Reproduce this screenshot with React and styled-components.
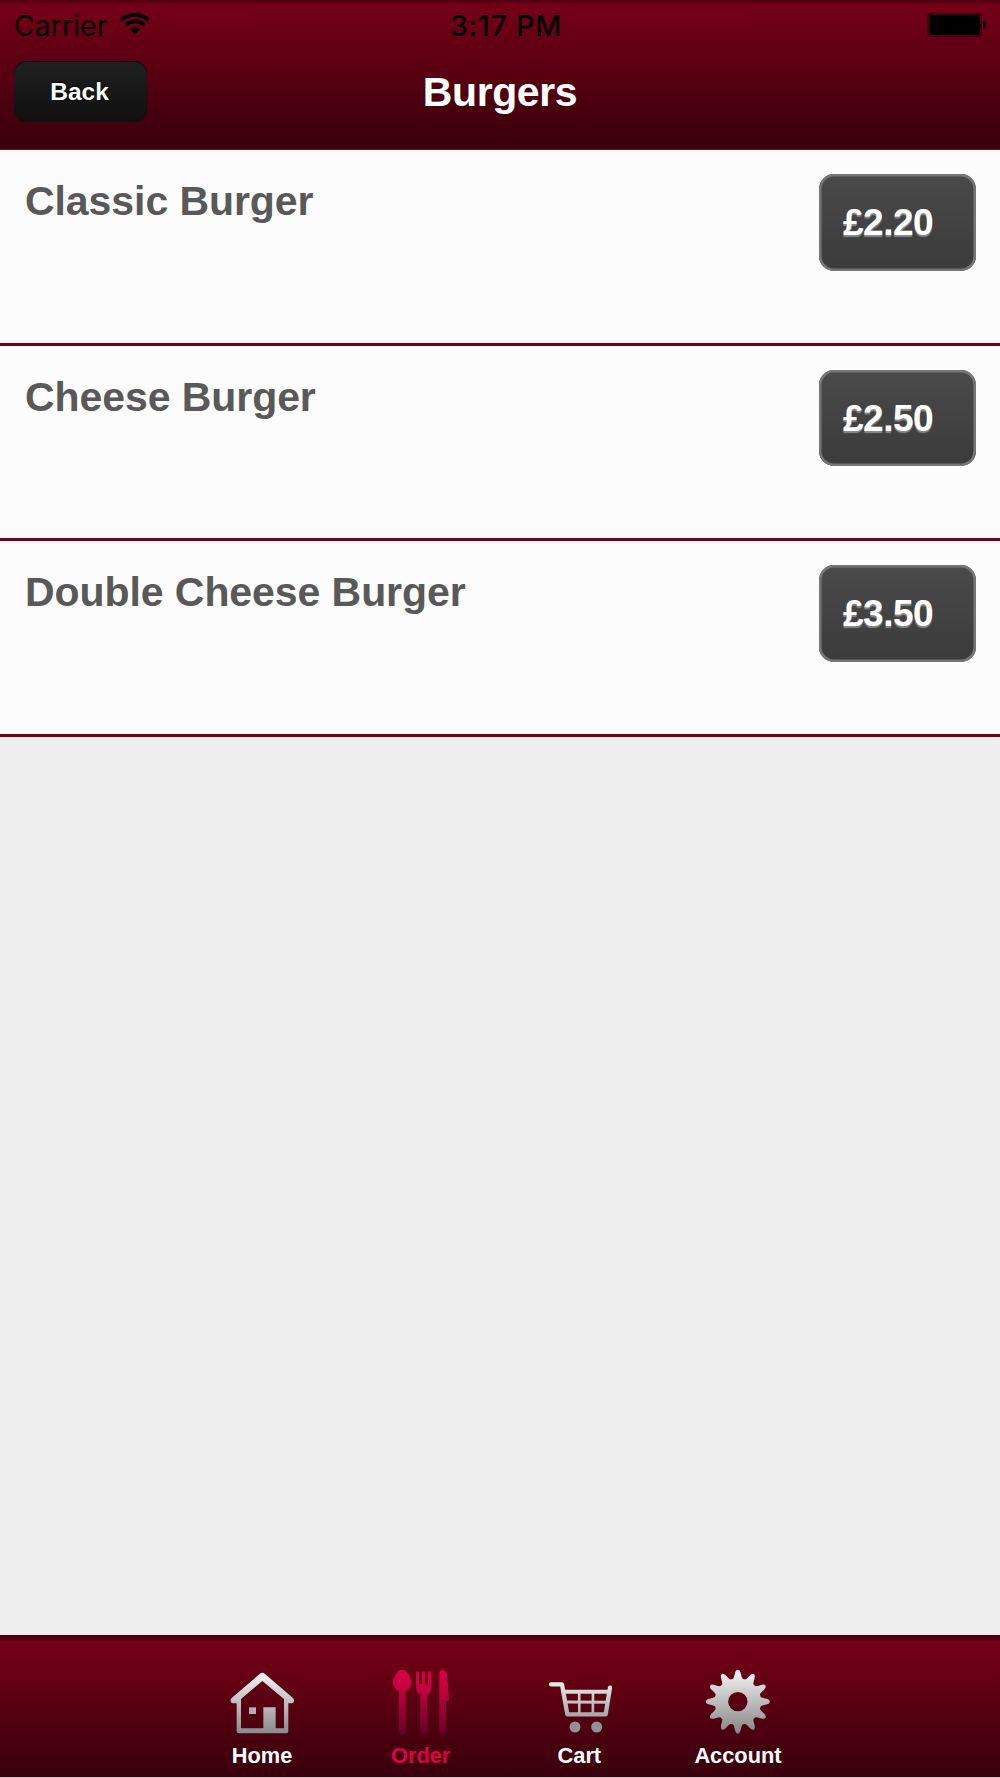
import React, { useState } from 'react';
import styled, { createGlobalStyle } from 'styled-components';

const helvetica = '"Liberation Sans", Arial, sans-serif';
const system = 'Inter, Roboto, sans-serif';

const burgers = [
	{ name: 'Classic Burger', price: '£2.20' },
	{ name: 'Cheese Burger', price: '£2.50' },
	{ name: 'Double Cheese Burger', price: '£3.50' },
];

const GearIcon = () => {
	const teeth = Array.from({ length: 12 }, (_, i) => i * 30);
	return (
		<svg viewBox="105 143 198 198">
			<defs>
				<linearGradient id="gear" gradientUnits="userSpaceOnUse" x1="0" y1="148" x2="0" y2="341">
					<stop offset="0" stopColor="#f4f4f4" />
					<stop offset="1" stopColor="#858585" />
				</linearGradient>
				<mask id="gearMask" maskUnits="userSpaceOnUse" x="105" y="144" width="198" height="198">
					<circle cx="203.5" cy="244" r="70" fill="#fff" />
					{teeth.map(angle => (
						<path
							key={angle}
							d="M182 182 Q191 180 195 158 Q198 148 203.500 148 Q209 148 212 158 Q216 180 225 182 V196 H182 Z"
							fill="#fff"
							transform={`rotate(${angle} 203.500 244)`}
						/>
					))}
					<circle cx="203.5" cy="244" r="29" fill="#000" />
				</mask>
			</defs>
			<rect x="105" y="144" width="198" height="198" fill="url(#gear)" mask="url(#gearMask)" />
		</svg>
	);
};

const HomeIcon = () => (
	<svg viewBox="87 143 198 198">
		<defs>
			<linearGradient id="home" gradientUnits="userSpaceOnUse" x1="0" y1="157" x2="0" y2="339">
				<stop offset="0" stopColor="#f4f4f4" />
				<stop offset="1" stopColor="#8a8a8a" />
			</linearGradient>
		</defs>
		<path
			d="M187 157 Q191 157 195 161 L279 233 Q283 237 282 243 Q281 249 275 249 H265 V333 Q265 339 259 339 H116 Q110 339 110 333 V249 H99 Q93 249 92 243 Q91 237 95 233 L179 161 Q183 157 187 157 Z M187 182 L123 236 V324 H190 V261 H227 V324 H252 V236 Z"
			fill="url(#home)"
			fillRule="evenodd"
		/>
		<path d="M147 261 H168 V281 H147 Z" fill="#b2b0b0" />
	</svg>
);

const CutleryIcon = () => (
	<svg viewBox="83 143 198 198">
		<defs>
			<linearGradient id="cutlery" gradientUnits="userSpaceOnUse" x1="0" y1="148" x2="0" y2="341">
				<stop offset="0" stopColor="#d80045" />
				<stop offset="0.3" stopColor="#c4003f" />
				<stop offset="1" stopColor="#6a0023" />
			</linearGradient>
		</defs>
		<g fill="url(#cutlery)">
			<path d="M125 148 C141 148 153 172 153 188 C153 201 146 209 136 213 V331 Q136 341 126 341 Q116 341 116 331 V213 C106 209 98 201 98 188 C98 172 110 148 125 148 Z" />
			<path d="M167 158 Q167 153 171.500 153 Q176 153 176 158 V188 Q176 192 180.500 192 Q185 192 185 188 V158 Q185 153 190 153 Q195 153 195 158 V188 Q195 192 199 192 Q203 192 203 188 V158 Q203 153 208 153 Q213 153 213 158 V201 Q213 217 200 223 V331 Q200 341 190 341 Q180 341 180 331 V223 Q167 217 167 201 Z" />
			<path d="M237 160 Q238 149 247 149 Q256 149 259 161 Q264 190 266 238 Q266 242 257 242 V331 Q257 341 247 341 Q237 341 237 331 Z" />
		</g>
	</svg>
);

const CartIcon = () => (
	<svg viewBox="77 142 198 198">
		<defs>
			<linearGradient id="cart" gradientUnits="userSpaceOnUse" x1="0" y1="182" x2="0" y2="336">
				<stop offset="0" stopColor="#ededed" />
				<stop offset="1" stopColor="#858585" />
			</linearGradient>
		</defs>
		<g stroke="url(#cart)" fill="none" strokeLinecap="round" strokeLinejoin="round">
			<path d="M92 191 H125 L141 281 H256 L269 201" strokeWidth="13" />
			<path d="M129 213.500 L265 213" strokeWidth="12" />
			<path d="M135 244 L261 244.500" strokeWidth="9" />
			<path d="M176.500 215 L177 280 M218 215 L217.500 280" strokeWidth="8" />
		</g>
		<circle cx="164" cy="319" r="16.500" fill="#929191" />
		<circle cx="229" cy="319" r="16.500" fill="#929191" />
	</svg>
);

const tabs = [
	{ label: 'Home', icon: HomeIcon },
	{ label: 'Order', icon: CutleryIcon },
	{ label: 'Cart', icon: CartIcon },
	{ label: 'Account', icon: GearIcon },
];

const App = () => {
	const [selected, setSelected] = useState('Order');

	return (
		<Screen>
			<GlobalStyle />
			<Header>
				<StatusBar>
					<Carrier>
						<span>Carrier</span>
						<svg width="30" height="22" viewBox="0 0 30 22">
							<g fill="none" stroke="#000" strokeWidth="3.6">
								<path d="M1.300 7.300 A20 20 0 0 1 28.700 7.300" />
								<path d="M5.900 12 A13.300 13.300 0 0 1 24.100 12" />
							</g>
							<path d="M15 21.500 L9.900 16.400 A7.400 7.400 0 0 1 20.100 16.400 Z" fill="#000" />
						</svg>
					</Carrier>
					<Clock>3:17 PM</Clock>
					<Battery>
						<svg width="60" height="24" viewBox="0 0 60 24">
							<rect x="0.8" y="0.8" width="53.400" height="22.400" rx="3.500" fill="none" stroke="#2b0008" strokeWidth="1.2" />
							<rect x="2.200" y="2" width="50.600" height="20" rx="2" fill="#000" />
							<path d="M56 8 Q59 8.500 59 12 Q59 15.500 56 16 Z" fill="#000" />
						</svg>
					</Battery>
				</StatusBar>
				<NavBar>
					<BackButton>Back</BackButton>
					<Title>Burgers</Title>
				</NavBar>
			</Header>
			<List>
				{burgers.map(item => (
					<Item key={item.name}>
						<Name>{item.name}</Name>
						<Price>{item.price}</Price>
					</Item>
				))}
			</List>
			<TabBar>
				{tabs.map(({ label, icon: Icon }) => (
					<Tab key={label} $selected={selected === label} onClick={() => setSelected(label)}>
						<Icon />
						<span>{label}</span>
					</Tab>
				))}
			</TabBar>
		</Screen>
	);
};

const GlobalStyle = createGlobalStyle`
	* {
		box-sizing: border-box;
	}

	body {
		margin: 0;
	}
`;

const Screen = styled.div`
	background: #eee;
	display: flex;
	flex-direction: column;
	font-family: ${helvetica};
	height: 1778px;
	width: 1000px;
`;

const Header = styled.header`
	background: linear-gradient(#4a000e 0, #5c0012 2px, #740017 4px, #720016 12px, #38000b 148px);
	border-bottom: 1px solid #650e20;
	flex: none;
	height: 150px;
`;

const StatusBar = styled.div`
	align-items: center;
	color: #000;
	display: grid;
	font-family: ${system};
	grid-template-columns: 1fr auto 1fr;
	height: 50px;
	padding: 0 13px 0 14px;
`;

const Carrier = styled.div`
	align-items: center;
	display: flex;
	font-size: 28.5px;
	gap: 13px;
	letter-spacing: 0;

	svg {
		margin-top: -3px;
	}
`;

const Clock = styled.div`
	font-size: 28.5px;
	font-weight: 500;
	letter-spacing: 0.8px;
	margin-left: 11px;
`;

const Battery = styled.div`
	display: flex;
	justify-content: flex-end;
`;

const NavBar = styled.div`
	align-items: start;
	display: grid;
	grid-template-columns: 1fr auto 1fr;
	padding: 11px 14px 0;
`;

const BackButton = styled.button`
	background: linear-gradient(#202020, #101010);
	border: 0;
	border-radius: 13px;
	box-shadow: inset 0 1px 1px #0c0c0c;
	color: #fff;
	font: bold 24.5px ${helvetica};
	height: 61px;
	padding: 1px 2px 0 0;
	text-shadow: 0 -1px 1px #000;
	width: 133px;
`;

const Title = styled.h1`
	color: #fff;
	font-size: 41px;
	letter-spacing: -0.4px;
	line-height: 48px;
	margin: 7px 0 0;
`;

const List = styled.main`
	flex: 1;
`;

/* the separator is a fractional height, so it is painted rather than set as a border */
const Item = styled.div`
	align-items: flex-start;
	background: linear-gradient(to top, #720016 2.600px, #fcfcfc 2.800px);
	display: flex;
	height: 195.700px;
	justify-content: space-between;
	padding: 24px 24px 0;
`;

const Name = styled.h2`
	color: #595959;
	font-size: 41px;
	letter-spacing: -0.07px;
	line-height: 48px;
	margin: 3px 0 0 1px;
`;

const Price = styled.div`
	background: linear-gradient(#4a4a4a, #3b3b3b);
	border-radius: 15px;
	box-shadow: inset 0 0 0 2.600px #757575;
	color: #fff;
	font-size: 37px;
	font-weight: bold;
	height: 96.700px;
	letter-spacing: -0.5px;
	line-height: 97px;
	padding-left: 24px;
	text-shadow: 0 2px 1px #8a8a8a;
	width: 157px;
`;

const TabBar = styled.nav`
	background: linear-gradient(#4a000e 0, #56000f 5px, #720016 6px, #720016 14px, #38000b 142px);
	border-bottom: 1px solid #d5c5c8;
	display: flex;
	flex: none;
	height: 143px;
	justify-content: center;
`;

const Tab = styled.button`
	align-items: center;
	background: none;
	border: 0;
	color: ${props => (props.$selected ? '#e00048' : '#fff')};
	display: flex;
	flex-direction: column;
	font: bold 21.8px ${helvetica};
	padding: 33px 0 0;
	width: 158.670px;

	svg {
		height: 66px;
		width: 66px;
	}

	span {
		line-height: 26px;
		margin-top: 9px;
	}
`;

export default App;
